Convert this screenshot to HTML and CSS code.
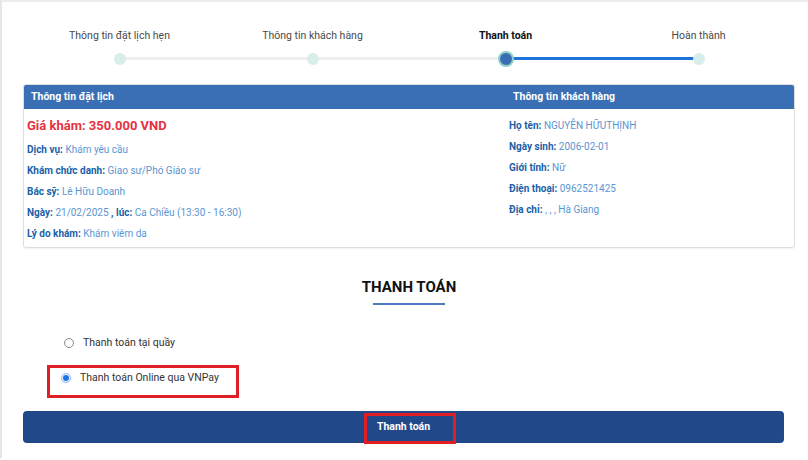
FILE: index.html
```html
<!DOCTYPE html>
<html lang="vi">
<head>
    <meta charset="UTF-8">
    <meta name="viewport" content="width=device-width, initial-scale=1.0">
    <title>Đặt lịch khám - Thanh toán</title>
    <link rel="stylesheet" href="styles.css">
</head>
<body>
    <div class="page">
        <div class="stepper">
            <div class="step done">
                <div class="step-label">Thông tin đặt lịch hẹn</div>
                <div class="step-dot"></div>
            </div>
            <div class="step done">
                <div class="step-label">Thông tin khách hàng</div>
                <div class="step-dot"></div>
            </div>
            <div class="step active">
                <div class="step-label">Thanh toán</div>
                <div class="step-dot"></div>
            </div>
            <div class="step last">
                <div class="step-label">Hoàn thành</div>
                <div class="step-dot"></div>
            </div>
        </div>

        <div class="info-card">
            <div class="info-col left">
                <div class="info-head">Thông tin đặt lịch</div>
                <div class="info-body">
                    <p class="price">Giá khám: 350.000 VND</p>
                    <p><b>Dịch vụ:</b> Khám yêu cầu</p>
                    <p><b>Khám chức danh:</b> Giao sư/Phó Giáo sư</p>
                    <p><b>Bác sỹ:</b> Lê Hữu Doanh</p>
                    <p><b>Ngày:</b> 21/02/2025 <b>, lúc:</b> Ca Chiều (13:30 - 16:30)</p>
                    <p><b>Lý do khám:</b> Khám viêm da</p>
                </div>
            </div>
            <div class="info-col right">
                <div class="info-head">Thông tin khách hàng</div>
                <div class="info-body">
                    <p><b>Họ tên:</b> NGUYỄN HỮUTHỊNH</p>
                    <p><b>Ngày sinh:</b> 2006-02-01</p>
                    <p><b>Giới tính:</b> Nữ</p>
                    <p><b>Điện thoại:</b> 0962521425</p>
                    <p><b>Địa chỉ:</b> , , , Hà Giang</p>
                </div>
            </div>
        </div>

        <h2 class="section-title">THANH TOÁN</h2>

        <div class="pay-options">
            <label class="pay-option">
                <span class="radio"></span>
                Thanh toán tại quầy
            </label>
            <label class="pay-option marked">
                <span class="radio checked"></span>
                Thanh toán Online qua VNPay
            </label>
        </div>

        <button class="pay-btn"><span class="pay-btn-text">Thanh toán</span></button>
    </div>
</body>
</html>
```

FILE: styles.css
```css
body {
    margin: 0;
    background: #fff;
    font-family: Roboto, "Liberation Sans", Arial, sans-serif;
    color: #333;
    border-top: 2px solid #ececec;
    border-left: 2px solid #e6e6e6;
    height: 458px;
    box-sizing: border-box;
}
.page {
    width: 772px;
    padding-left: 21px;
}

/* stepper */
.stepper {
    display: grid;
    grid-template-columns: repeat(4, 1fr);
    padding-top: 27px;
}
.step {
    position: relative;
    display: flex;
    flex-direction: column;
    align-items: center;
}
.step-label {
    font-size: 10.5px;
    line-height: 14px;
    color: #4a4a4a;
}
.step.active .step-label {
    font-weight: bold;
    color: #111;
}
.step-dot {
    width: 12px;
    height: 12px;
    margin-top: 10px;
    border-radius: 50%;
    background: #d7eeeb;
    position: relative;
    z-index: 1;
}
.step.active .step-dot {
    background: #3b6db2;
    box-shadow: 0 0 0 2px #8fd0c8;
}
.step::after {
    content: "";
    position: absolute;
    left: 50%;
    width: 100%;
    top: 28px;
    height: 3px;
    background: #eeeeee;
}
.step.active::after {
    background: #1f74dc;
}
.step.last::after {
    display: none;
}

/* info card */
.info-card {
    display: grid;
    grid-template-columns: 482px 1fr;
    margin-top: 19px;
    border: 1px solid #dedede;
    border-radius: 3px;
    box-shadow: 0 1px 2px rgba(0, 0, 0, 0.06);
    overflow: hidden;
}
.info-head {
    background: #3a6fb5;
    color: #fff;
    font-size: 10.5px;
    font-weight: bold;
    height: 24px;
    line-height: 24px;
    padding-left: 7px;
}
.info-body {
    padding: 4px 3px 3px;
}
.right .info-body {
    padding-top: 6px;
}
.info-body p {
    margin: 0;
    font-size: 10px;
    line-height: 21px;
    color: #5b95d1;
}
.info-body b {
    color: #1b5fa8;
}
.info-body .price {
    color: #e6323f;
    font-size: 13px;
    font-weight: bold;
    line-height: 26px;
}

/* payment */
.section-title {
    margin: 29px 0 0;
    text-align: center;
    font-size: 15px;
    line-height: 20px;
    color: #111;
}
.section-title::after {
    content: "";
    display: block;
    width: 72px;
    height: 2px;
    margin: 6px auto 0;
    background: #4a7bc0;
}
.pay-options {
    display: flex;
    flex-direction: column;
    align-items: flex-start;
    margin-top: 25px;
    padding-left: 24px;
}
.pay-option {
    display: flex;
    align-items: center;
    gap: 9px;
    font-size: 10.5px;
    line-height: 20px;
    color: #333;
    padding-left: 14px;
    border: 3px solid transparent;
}
.pay-option.marked {
    margin-top: 9px;
    border-color: #e01f24;
    width: 175px;
    padding: 1px 0 8px 11px;
    line-height: 18px;
}
.radio {
    width: 8px;
    height: 8px;
    border: 1px solid #888;
    border-radius: 50%;
    background: #fff;
}
.radio.checked {
    background: #1a73e8;
    border-color: #a9c9f5;
    box-shadow: inset 0 0 0 1px #fff;
}
.pay-btn {
    display: block;
    width: 761px;
    height: 32px;
    margin-top: 13px;
    border: none;
    border-radius: 4px;
    background: #214889;
    color: #fff;
    font-family: inherit;
    font-size: 10.5px;
    font-weight: bold;
}
.pay-btn-text {
    position: relative;
    display: inline-block;
    line-height: 14px;
}
.pay-btn-text::after {
    content: "";
    position: absolute;
    left: -13px;
    right: -26px;
    top: -7px;
    bottom: -10px;
    border: 3px solid #e01f24;
}
```
